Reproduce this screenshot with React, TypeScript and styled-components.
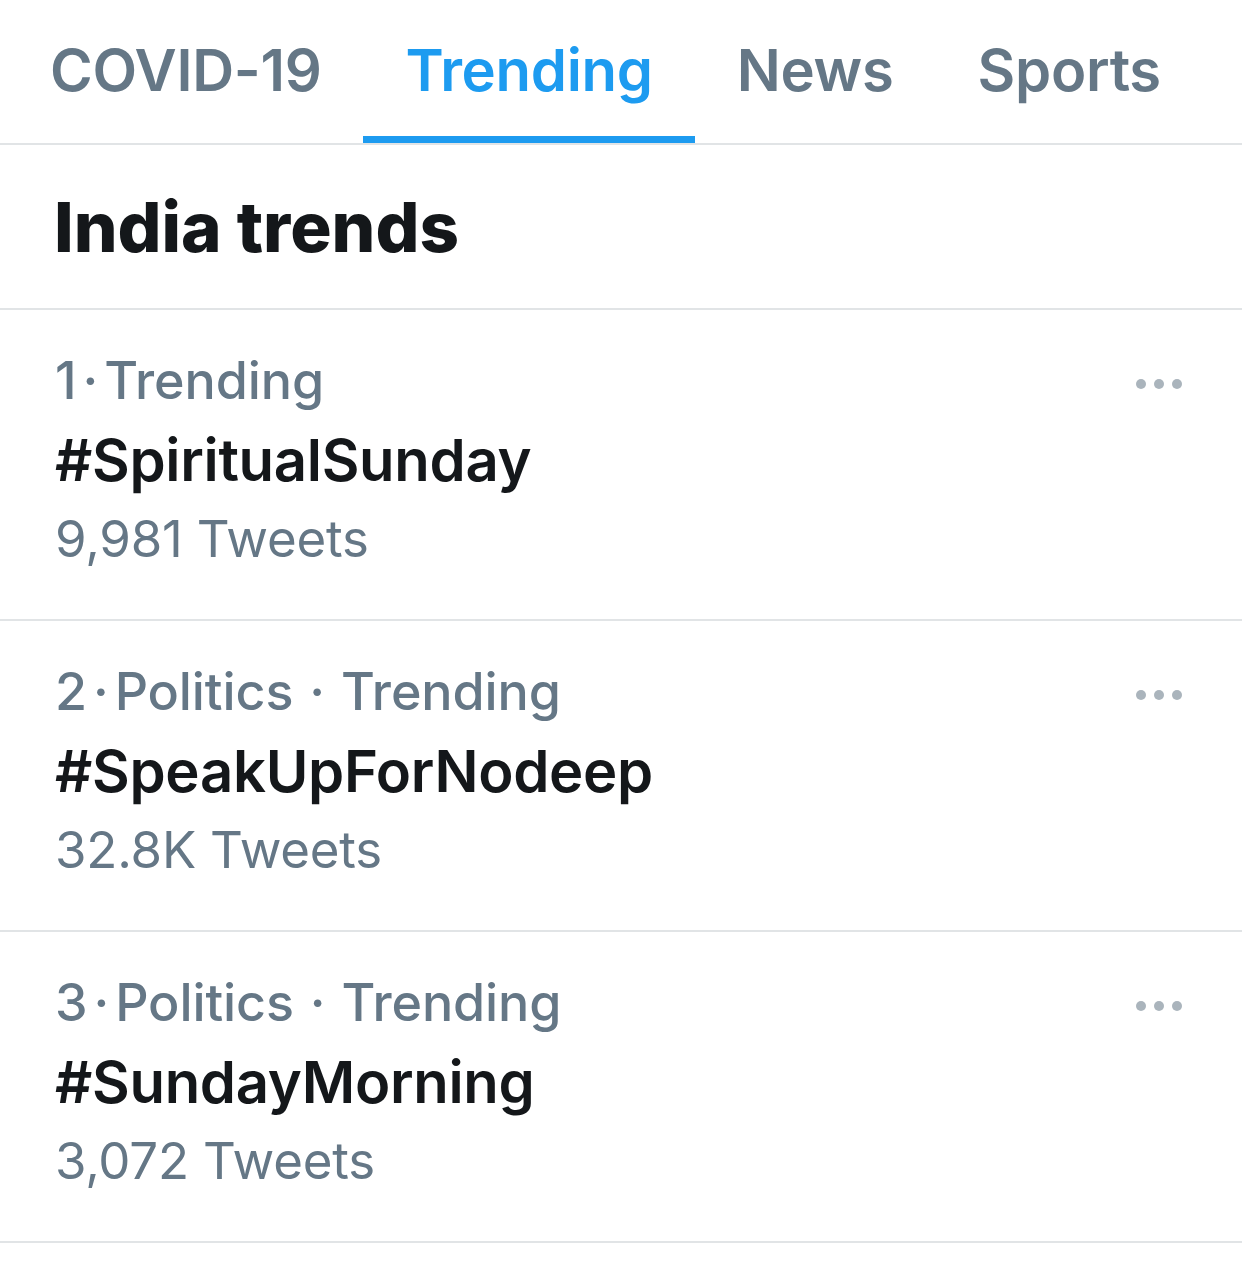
import React, { FC } from 'react';
import styled, { createGlobalStyle } from 'styled-components';

const GlobalStyle = createGlobalStyle`
  html, body {
    margin: 0;
    padding: 0;
    background: #fff;
  }
  body {
    font-family: Inter, 'Liberation Sans', Arial, sans-serif;
    -webkit-font-smoothing: antialiased;
  }
`;

const Page = styled.div`
  width: 1242px;
  background: #fff;
`;

const TabBar = styled.nav`
  display: flex;
  height: 145px;
  padding-left: 8px;
  border-bottom: 2px solid #e1e4e6;
  box-sizing: border-box;
`;

const Tab = styled.div<{ active?: boolean }>`
  position: relative;
  display: flex;
  align-items: center;
  padding: 0 42px 4px;
  font-size: 58px;
  font-weight: 600;
  letter-spacing: -0.3px;
  color: ${p => (p.active ? '#1d9bf0' : '#657786')};
  &::after {
    content: '';
    position: absolute;
    left: 0;
    right: 0;
    bottom: 0;
    height: 7px;
    background: ${p => (p.active ? '#1d9bf0' : 'transparent')};
  }
`;

const Heading = styled.h2`
  margin: 0;
  height: 165px;
  padding: 0 0 0 54px;
  display: flex;
  align-items: center;
  font-size: 69px;
  font-weight: 800;
  letter-spacing: 0;
  color: #14171a;
  border-bottom: 2px solid #e1e4e6;
  box-sizing: border-box;
`;

const TrendRow = styled.div`
  display: flex;
  justify-content: space-between;
  height: 311px;
  padding: 32px 60px 0 55px;
  border-bottom: 2px solid #e1e4e6;
  box-sizing: border-box;
`;

const TrendText = styled.div`
  display: flex;
  flex-direction: column;
`;

const Meta = styled.div`
  font-size: 52px;
  line-height: 78px;
  font-weight: 500;
  color: #657786;
  letter-spacing: -0.1px;
`;

const Dot = styled.span<{ wide?: boolean }>`
  margin: ${p => (p.wide ? '0 16px' : '0 6px')};
`;

const Tag = styled.div`
  font-size: 58px;
  line-height: 80px;
  font-weight: 600;
  color: #14171a;
  letter-spacing: -0.3px;
`;

const Count = styled.div`
  font-size: 51px;
  line-height: 78px;
  font-weight: 400;
  color: #657786;
  letter-spacing: -0.2px;
`;

const More = styled.div`
  display: flex;
  gap: 8px;
  margin-top: 37px;
  height: 10px;
  span {
    width: 10px;
    height: 10px;
    border-radius: 50%;
    background: #aab4bc;
  }
`;

interface Trend {
  rank: number;
  category?: string;
  tag: string;
  count: string;
}

const trends: Trend[] = [
  { rank: 1, tag: '#SpiritualSunday', count: '9,981 Tweets' },
  { rank: 2, category: 'Politics', tag: '#SpeakUpForNodeep', count: '32.8K Tweets' },
  { rank: 3, category: 'Politics', tag: '#SundayMorning', count: '3,072 Tweets' },
];

const tabs = ['COVID-19', 'Trending', 'News', 'Sports'];

const App: FC = () => {
  return (
    <Page>
      <GlobalStyle />
      <TabBar>
        {tabs.map(t => (
          <Tab key={t} active={t === 'Trending'}>
            {t}
          </Tab>
        ))}
      </TabBar>
      <Heading>India trends</Heading>
      {trends.map(t => (
        <TrendRow key={t.rank}>
          <TrendText>
            <Meta>
              {t.rank}
              <Dot>·</Dot>
              {t.category && (
                <>
                  {t.category}
                  <Dot wide>·</Dot>
                </>
              )}
              Trending
            </Meta>
            <Tag>{t.tag}</Tag>
            <Count>{t.count}</Count>
          </TrendText>
          <More>
            <span />
            <span />
            <span />
          </More>
        </TrendRow>
      ))}
    </Page>
  );
};

export default App;
